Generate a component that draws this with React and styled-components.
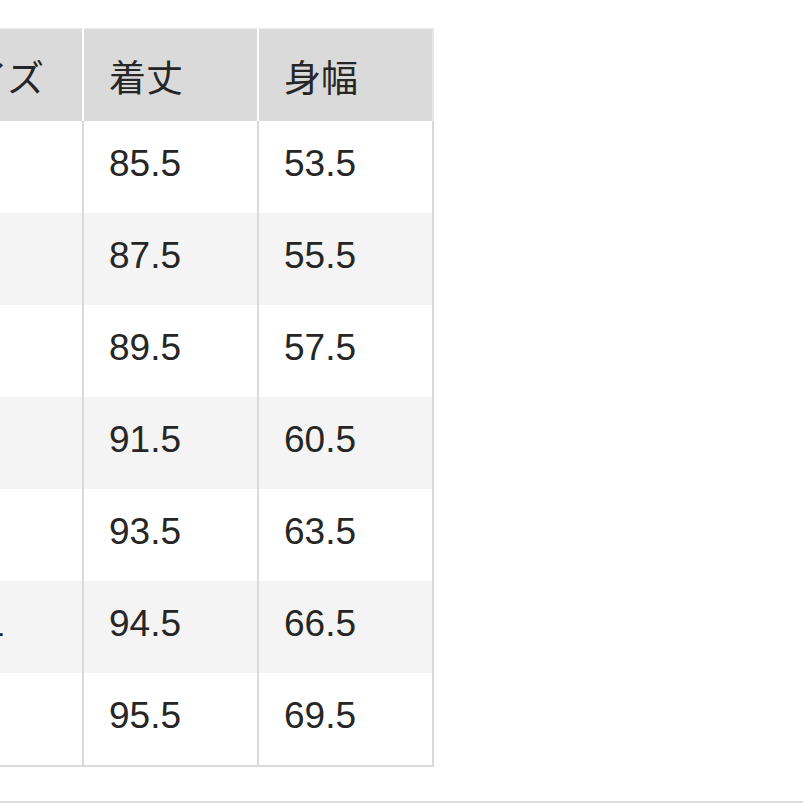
import React from 'react';
import styled, { createGlobalStyle } from 'styled-components';

const GlobalStyle = createGlobalStyle`
    html, body {
        margin: 0;
        padding: 0;
        background: #fff;
        overflow: hidden;
    }
    body {
        font-family: "Liberation Sans", "Noto Sans CJK JP", sans-serif;
        color: #262626;
    }
`;

const Page = styled.div`
    width: 803px;
    height: 803px;
    padding-top: 28px;
    box-sizing: border-box;
    display: flex;
    flex-direction: column;
    align-items: flex-start;
`;

const SizeTable = styled.table`
    margin-left: -91px;
    width: 525px;
    table-layout: fixed;
    border-collapse: separate;
    border-spacing: 0;
    border-bottom: 2px solid #d9d9d9;
    font-size: 37px;
    flex: none;
`;

const HeadCell = styled.th`
    width: 175px;
    height: 93px;
    padding: 2px 0 0 25px;
    box-sizing: border-box;
    background: #dadada;
    border-top: 1px solid #ececec;
    border-right: 2px solid ${(p) => (p.last ? '#e6e6e6' : '#fff')};
    text-align: left;
    font-weight: 400;
    vertical-align: middle;
    white-space: nowrap;
    font-family: "Noto Sans CJK JP", sans-serif;
`;

const Row = styled.tr`
    background: ${(p) => (p.shaded ? '#f4f4f4' : '#fff')};
`;

const Cell = styled.td`
    height: 92px;
    padding: 0 0 6px 25px;
    box-sizing: border-box;
    border-right: 2px solid #dadada;
    text-align: left;
    vertical-align: middle;
    white-space: nowrap;
`;

const BottomRule = styled.div`
    margin-top: auto;
    align-self: stretch;
    height: 2px;
    background: #dedede;
`;

const rows = [
    ['XS', '85.5', '53.5'],
    ['S', '87.5', '55.5'],
    ['M', '89.5', '57.5'],
    ['L', '91.5', '60.5'],
    ['XL', '93.5', '63.5'],
    ['XXL', '94.5', '66.5'],
    ['3XL', '95.5', '69.5'],
];

export default function App() {
    return (
        <Page>
            <GlobalStyle />
            <SizeTable>
                <thead>
                    <tr>
                        <HeadCell>サイズ</HeadCell>
                        <HeadCell>着丈</HeadCell>
                        <HeadCell last>身幅</HeadCell>
                    </tr>
                </thead>
                <tbody>
                    {rows.map((r, i) => (
                        <Row key={r[0]} shaded={i % 2 === 1}>
                            <Cell>{r[0]}</Cell>
                            <Cell>{r[1]}</Cell>
                            <Cell>{r[2]}</Cell>
                        </Row>
                    ))}
                </tbody>
            </SizeTable>
            <BottomRule />
        </Page>
    );
}
